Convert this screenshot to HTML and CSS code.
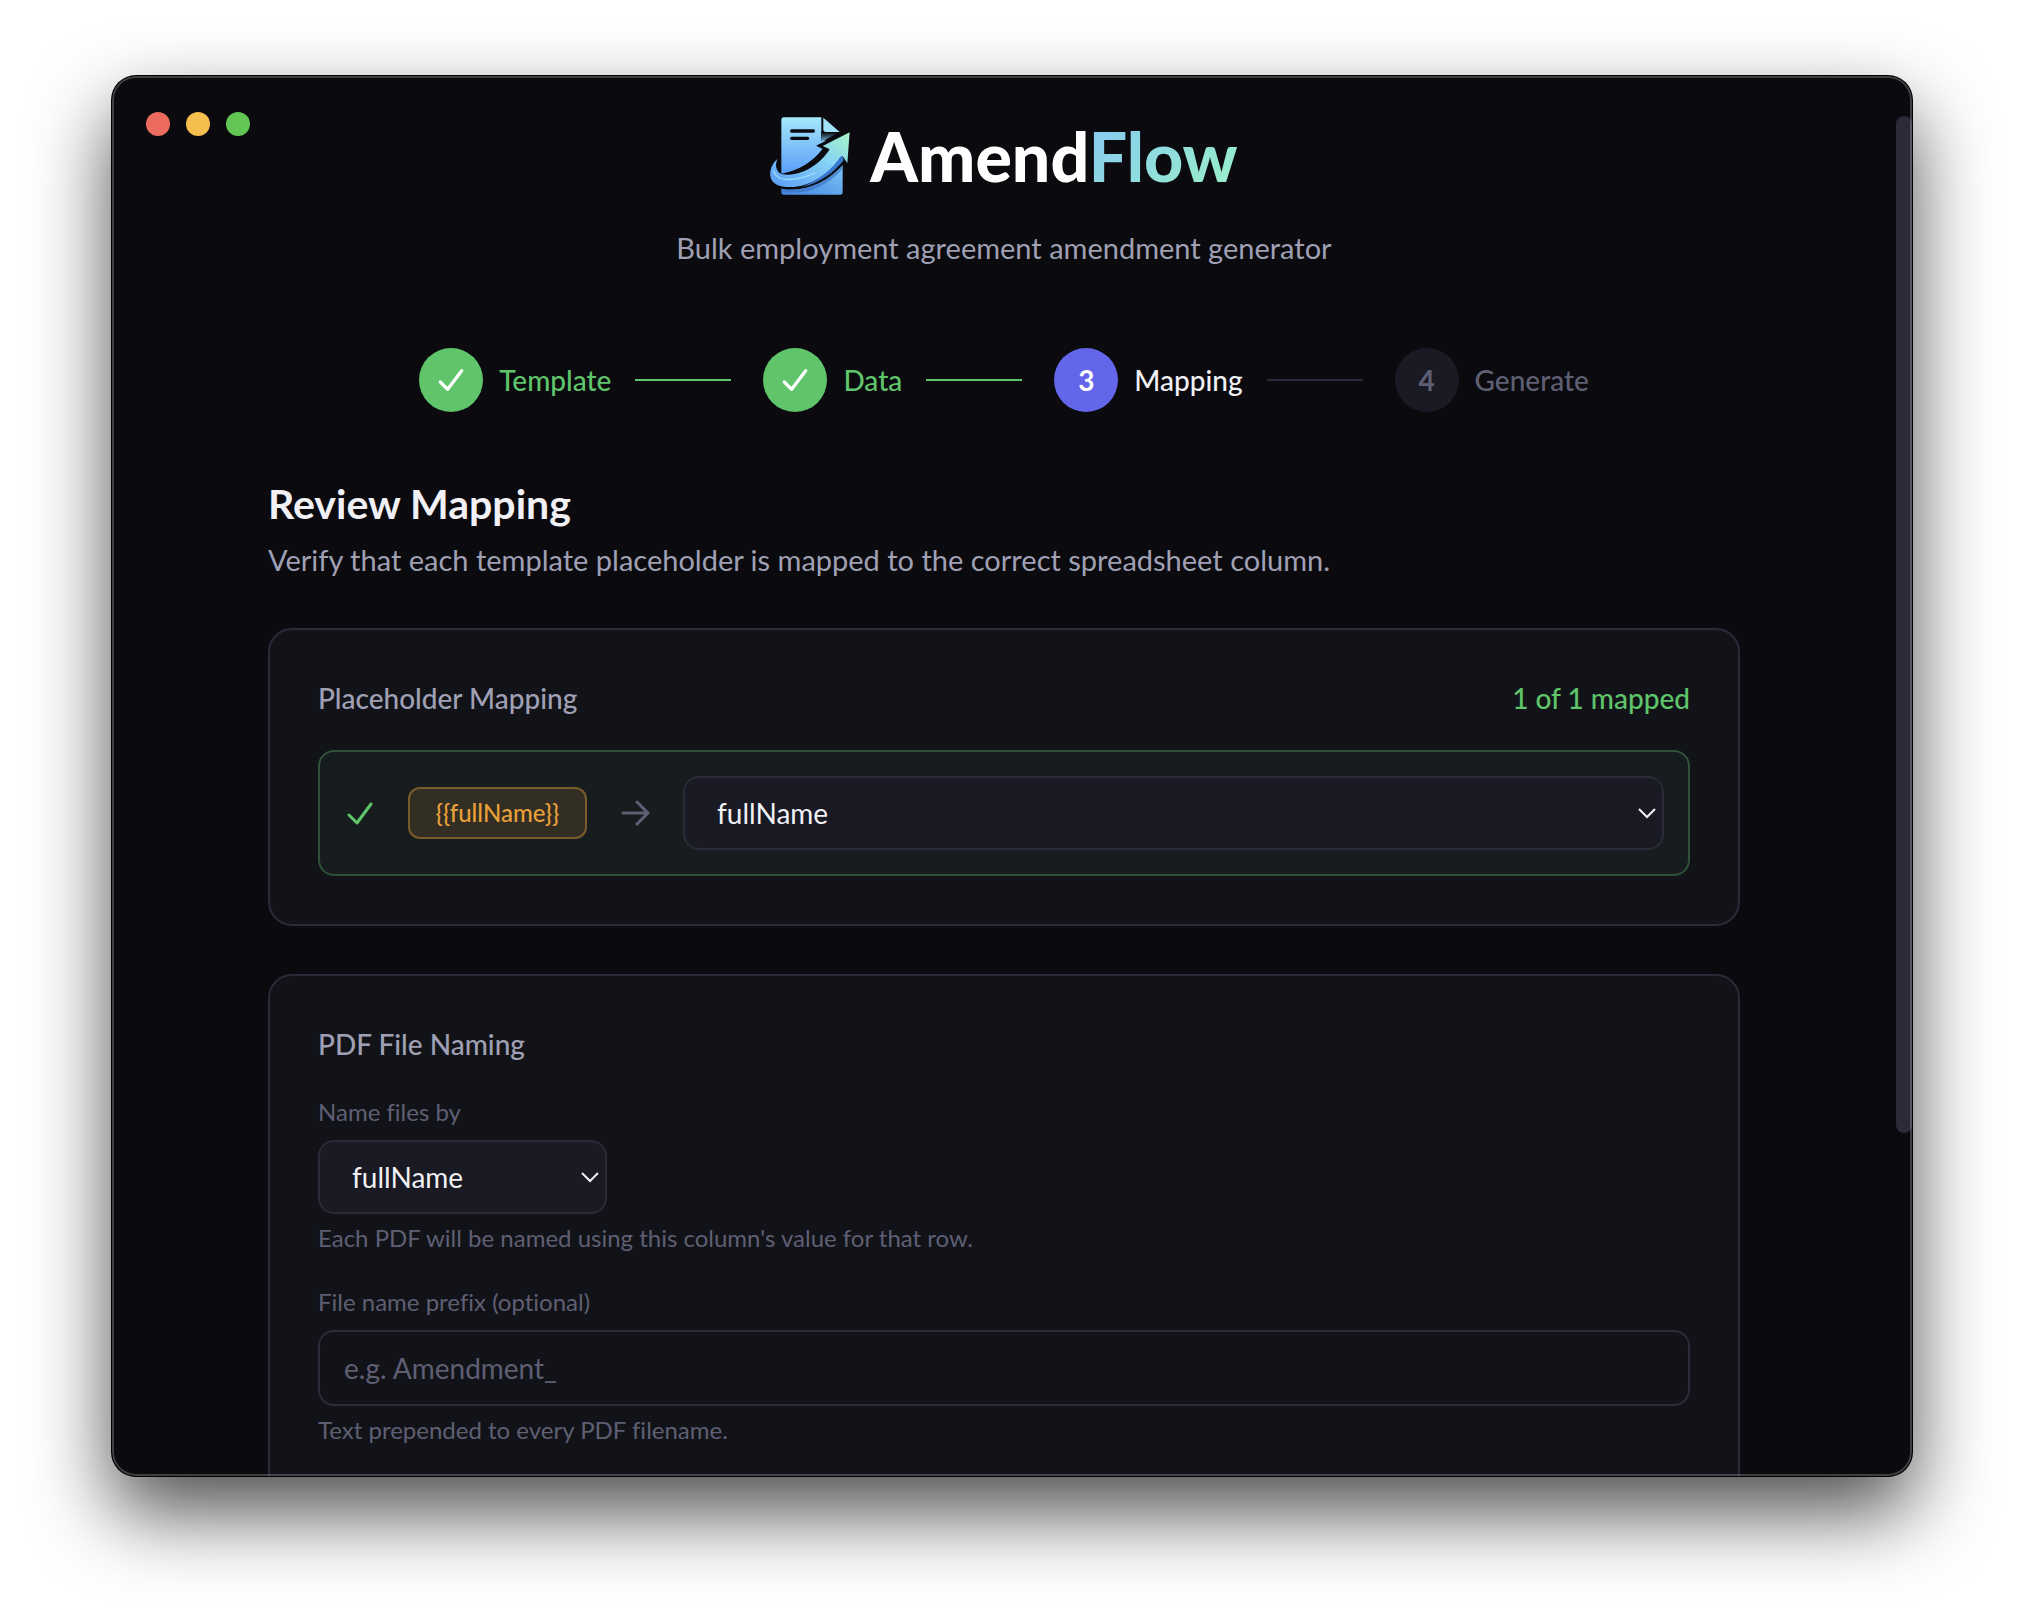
FILE: index.html
```html
<!doctype html>
<html lang="en">
<head>
<meta charset="UTF-8" />
<meta name="viewport" content="width=device-width,initial-scale=1" />
<title>AmendFlow</title>
<link rel="stylesheet" href="styles.css">
</head>
<body>

<div class="window">
	<div class="lights">
		<button class="light light-close" type="button" aria-label="Close"></button>
		<button class="light light-min" type="button" aria-label="Minimize"></button>
		<button class="light light-max" type="button" aria-label="Zoom"></button>
	</div>

	<div class="page">
		<header class="header">
			<h1 class="brand">
				<svg class="brand-icon" viewBox="30 36 240 234" aria-hidden="true">
					<defs>
						<linearGradient id="doc" x1="0" y1="0" x2="0" y2="1">
							<stop offset="0" stop-color="#a5e8fb"/>
							<stop offset="1" stop-color="#5a9ef8"/>
						</linearGradient>
						<linearGradient id="base" x1="0" y1="1" x2="1" y2="0">
							<stop offset="0" stop-color="#4486e2"/>
							<stop offset="1" stop-color="#7cc6f6"/>
						</linearGradient>
						<linearGradient id="arrow" x1="0" y1="1" x2="1" y2="0">
							<stop offset="0" stop-color="#5a9cf6"/>
							<stop offset=".6" stop-color="#86d4f6"/>
							<stop offset="1" stop-color="#a8f5c4"/>
						</linearGradient>
						<linearGradient id="fade" x1="0" y1="0" x2="0" y2="1">
							<stop offset="0" stop-color="#0a0a0f"/>
							<stop offset="1" stop-color="#0a0a0f" stop-opacity="0"/>
						</linearGradient>
					</defs>
					<path fill="url(#doc)" d="M72 37H184V105L199 107L169 122L188 131C160 168 118 197 64 206V45Q64 37 72 37Z"/>
					<path fill="#7cc4f2" d="M184 84H232L190 108L184 110Z"/>
					<path fill="url(#fade)" d="M183 82H240L199 107L183 112Z"/>
					<path fill="#a2e4fb" d="M190 38L239 81H198Q190 81 190 73Z"/>
					<path fill="none" stroke="#0a0a0f" stroke-width="10" stroke-linecap="round" d="M95 78H160M95 100H143"/>
					<path fill="url(#base)" d="M64 251C135 264 202 231 248 181V261Q248 269 240 269H72Q64 269 64 261Z"/>
					<path fill="#3568b8" opacity=".55" d="M64 251C135 264 202 231 248 181V192C205 238 150 270 80 262L64 258Z"/>
					<path fill="#0a0a0f" d="M269 74L169 122L188 131L209 133L269 90Z"/>
					<path fill="url(#arrow)" d="M269 82L262 175L248 153C215 196 175 230 125 242C80 252 34 245 31 212C29 193 38 174 52 162C44 182 48 198 64 207C120 218 180 180 209 133L188 123Z"/>
					<path fill="#3a78ce" d="M248 153L251 166C222 203 180 235 125 246C175 225 216 194 241 155Z"/>
					<path fill="none" stroke="#9cdcfb" stroke-width="4" d="M40 196C52 238 120 225 166 203"/>
				</svg>
				<span class="brand-name">Amend<span class="brand-flow">Flow</span></span>
			</h1>
			<p class="tagline">Bulk employment agreement amendment generator</p>
		</header>

		<ol class="steps">
			<li class="step step-done">
				<span class="step-dot"><svg viewBox="0 0 24 24" aria-hidden="true"><path d="M4 13.5L9.5 19L20 5"/></svg></span>
				<span class="step-label">Template</span>
			</li>
			<li class="step step-done">
				<span class="step-dot"><svg viewBox="0 0 24 24" aria-hidden="true"><path d="M4 13.5L9.5 19L20 5"/></svg></span>
				<span class="step-label">Data</span>
			</li>
			<li class="step step-active" aria-current="step">
				<span class="step-dot">3</span>
				<span class="step-label">Mapping</span>
			</li>
			<li class="step">
				<span class="step-dot">4</span>
				<span class="step-label">Generate</span>
			</li>
		</ol>

		<main>
			<h2 class="title">Review Mapping</h2>
			<p class="lead">Verify that each template placeholder is mapped to the correct spreadsheet column.</p>

			<section class="card">
				<div class="card-head">
					<h3 class="card-title">Placeholder Mapping</h3>
					<span class="card-count">1 of 1 mapped</span>
				</div>
				<div class="mapping">
					<svg class="icon icon-check" viewBox="0 0 32 32" aria-hidden="true"><path d="M5 18L13 26L27 7"/></svg>
					<label class="tag" for="map-fullname">{{fullName}}</label>
					<svg class="icon icon-arrow" viewBox="0 0 32 32" aria-hidden="true"><path d="M4 16H29M18 5L29 16L18 27"/></svg>
					<div class="select select-grow">
						<select id="map-fullname">
							<option>fullName</option>
						</select>
						<svg class="chevron" viewBox="0 0 18 12" aria-hidden="true"><path d="M1 2L9 10L17 2"/></svg>
					</div>
				</div>
			</section>

			<section class="card card-naming">
				<h3 class="card-title">PDF File Naming</h3>
				<div class="field">
					<label for="name-by">Name files by</label>
					<div class="select select-short">
						<select id="name-by">
							<option>fullName</option>
						</select>
						<svg class="chevron" viewBox="0 0 18 12" aria-hidden="true"><path d="M1 2L9 10L17 2"/></svg>
					</div>
					<p class="hint">Each PDF will be named using this column's value for that row.</p>
				</div>
				<div class="field">
					<label for="prefix">File name prefix (optional)</label>
					<input id="prefix" type="text" placeholder="e.g. Amendment_">
					<p class="hint">Text prepended to every PDF filename.</p>
				</div>
			</section>
		</main>
	</div>

	<div class="scrollbar"><div class="thumb"></div></div>
</div>

</body>
</html>
```

FILE: styles.css
```css
*{box-sizing:border-box;}
html,body,h1,h2,h3,p,ol{margin:0;padding:0;}
li{list-style:none;}

:root{
	--bg: #0a0a0f;
	--card: #121318;
	--field: #1a1a24;
	--line: #2a2a38;
	--text: #f0f0f5;
	--soft: #a0a0b4;
	--muted: #5f5f74;
	--green: #5fc46a;
	--indigo: #6366e8;
	--amber: #e8a03a;
}

body{
	display: grid;
	height: 100vh;
	padding: 76px 112px 148px;
	background: #fff;
	color: var(--text);
	font: 28px/40px Lato, "Open Sans", sans-serif;
	font-variant-ligatures: none;
}

/* app window */
.window{
	position: relative;
	display: flex;
	min-height: 0;
	overflow: hidden;
	border-radius: 24px;
	background: var(--bg);
	box-shadow: 0 0 0 1px #000, 0 36px 80px rgba(0,0,0,.7);
}
.window::after{
	content: "";
	position: absolute;
	inset: 0;
	border: 2px solid rgba(255,255,255,.22);
	border-radius: 24px;
	pointer-events: none;
}

.lights{
	position: absolute;
	top: 36px;
	left: 34px;
	display: flex;
	gap: 16px;
}
.light{
	width: 24px;
	height: 24px;
	padding: 0;
	border: 0;
	border-radius: 50%;
}
.light-close{background: #ed6a5f;}
.light-min{background: #f5bf4f;}
.light-max{background: #62c655;}

.page{
	flex: 1;
	max-width: 1536px;
	margin: 0 auto;
	padding: 36px 32px;
}

.scrollbar{
	display: flex;
	flex-direction: column;
	width: 16px;
	padding: 40px 0 4px;
}
.thumb{
	height: 75%;
	border-radius: 8px;
	background: var(--line);
}

/* header */
.header{
	text-align: center;
}
.brand{
	display: flex;
	align-items: center;
	justify-content: center;
	gap: 20px;
	font-size: 68px;
	line-height: 88px;
	font-weight: 900;
	color: #fff;
}
.brand-icon{
	width: 80px;
	height: 78px;
}
.brand-flow{
	background: linear-gradient(135deg, #86c8f2, #9af2c8);
	-webkit-background-clip: text;
	background-clip: text;
	color: transparent;
}
.tagline{
	margin-top: 28px;
	color: var(--soft);
	font-size: 29px;
}

/* steps */
.steps{
	display: flex;
	justify-content: center;
	margin: 80px 0 68px;
}
.step{
	display: flex;
	align-items: center;
	gap: 16px;
	color: var(--muted);
	font-weight: 500;
}
.step:not(:last-child)::after{
	content: "";
	width: 96px;
	height: 2px;
	margin: 0 32px 0 8px;
	background: var(--line);
}
.step-dot{
	display: flex;
	align-items: center;
	justify-content: center;
	width: 64px;
	height: 64px;
	border-radius: 50%;
	background: var(--field);
	font-weight: 700;
}
.step-dot svg{
	width: 32px;
	height: 32px;
	fill: none;
	stroke: #fff;
	stroke-width: 2.5;
	stroke-linecap: round;
	stroke-linejoin: round;
}
.step-done{color: var(--green);}
.step-done .step-dot,
.step-done:not(:last-child)::after{background: var(--green);}
.step-active{color: var(--text);}
.step-active .step-dot{
	background: var(--indigo);
	color: #fff;
}

/* content */
.title{
	font-size: 41px;
	line-height: 48px;
	font-weight: 700;
}
.lead{
	margin-top: 12px;
	color: var(--soft);
	font-size: 29px;
}
.card{
	margin-top: 48px;
	padding: 48px;
	border: 2px solid var(--line);
	border-radius: 24px;
	background: var(--card);
}
.card-naming{min-height: 640px;}
.card-head{
	display: flex;
	justify-content: space-between;
	margin-bottom: 32px;
}
.card-title{
	font-size: 28px;
	font-weight: 500;
	color: var(--soft);
}
.card-count{
	color: var(--green);
	font-weight: 500;
}

.mapping{
	display: flex;
	align-items: center;
	gap: 32px;
	padding: 24px;
	border: 2px solid #2d5238;
	border-radius: 16px;
	background: #171d1f;
}
.icon{
	flex: none;
	width: 32px;
	height: 32px;
	fill: none;
	stroke-width: 3;
	stroke-linecap: round;
	stroke-linejoin: round;
}
.icon-check{stroke: var(--green);}
.icon-arrow{stroke: var(--muted);}
.tag{
	min-width: 179px;
	padding: 8px 20px;
	border: 2px solid rgba(232,160,58,.4);
	border-radius: 12px;
	background: rgba(232,160,58,.13);
	color: var(--amber);
	font-size: 24px;
	line-height: 32px;
	font-weight: 500;
	text-align: center;
}

/* fields */
.select{position: relative;}
.select-grow{flex: 1;}
.select-short{width: 289px;}
select,
input{
	display: block;
	width: 100%;
	height: 74px;
	border: 2px solid var(--line);
	border-radius: 16px;
	background: var(--field);
	color: var(--text);
	font: inherit;
}
select{
	appearance: none;
	padding: 0 32px;
}
input{
	height: 76px;
	padding: 0 24px;
	background: transparent;
}
input::placeholder{
	color: var(--muted);
	opacity: 1;
}
.chevron{
	position: absolute;
	top: 50%;
	right: 8px;
	width: 18px;
	height: 12px;
	margin-top: -6px;
	fill: none;
	stroke: var(--text);
	stroke-width: 2;
	pointer-events: none;
}
.field{
	display: grid;
	margin-top: 32px;
	color: var(--muted);
	font-size: 24px;
	line-height: 32px;
}
.field label{margin-bottom: 12px;}
.field select,
.field input{font-size: 28px;}
.hint{margin-top: 8px;}
```
